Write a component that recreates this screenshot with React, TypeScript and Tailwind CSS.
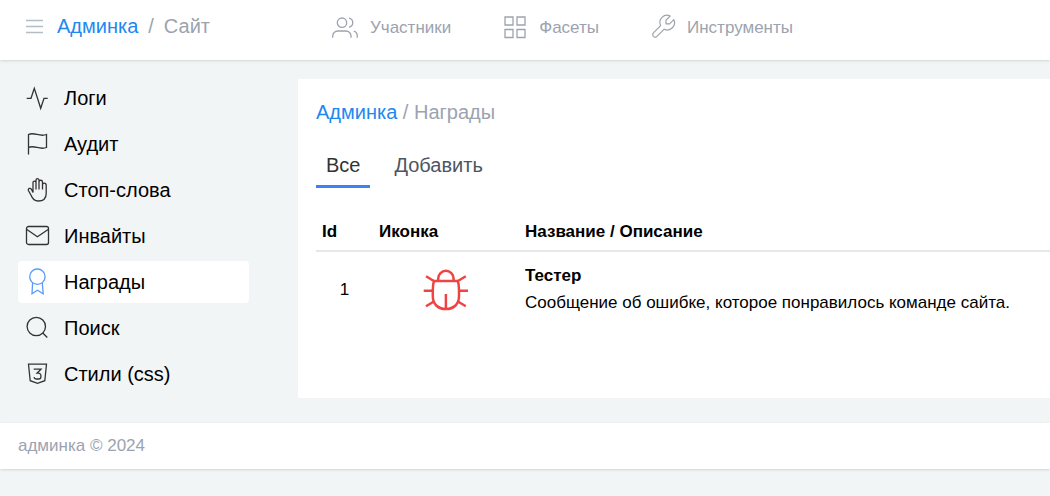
import type { ReactNode } from 'react';

interface IconProps {
  children: ReactNode;
  viewBox?: string;
  className?: string;
}

function Icon({ children, viewBox = '0 0 24 24', className = 'size-6' }: IconProps) {
  return (
    <svg
      viewBox={viewBox}
      className={`${className} shrink-0 overflow-visible`}
      fill="none"
      stroke="currentColor"
      strokeWidth="1.3"
      aria-hidden="true"
    >
      {children}
    </svg>
  );
}

const topLinks = [
  {
    label: 'Участники',
    icon: (
      <Icon viewBox="0 1 26 24" className="h-6 w-[26px]">
        <circle cx="10" cy="7.7" r="4.7" />
        <path d="M.7 22.7V21a5 5 0 0 1 5-5H14a5 5 0 0 1 5 5v1.700M17 3.200c5 1.200 5 7.800 0 9M21.700 16.200c2.300.6 3.600 2.300 3.600 4.800v1.700" />
      </Icon>
    ),
  },
  {
    label: 'Фасеты',
    icon: (
      <Icon viewBox="0 1 24 24">
        <path d="M2 2h8v8H2zM14 2h8v8h-8zM2 14.500h8v8H2zM14 14.500h8v8h-8z" />
      </Icon>
    ),
  },
  {
    label: 'Инструменты',
    icon: (
      <Icon viewBox="1.500 3.500 20 20">
        <path
          strokeWidth="1"
          strokeLinejoin="round"
          d="M17 10h-3V7l3.500-3.500a6 6 0 0 0-8 8l-6 6a2 2 0 0 0 3 3l6-6a6 6 0 0 0 8-8z"
        />
      </Icon>
    ),
  },
];

const sideLinks = [
  {
    label: 'Логи',
    icon: <path d="M1.700 12.300H6l3.300-10 6.400 20 3.300-10h3.700" />,
  },
  {
    label: 'Аудит',
    icon: <path d="M3.500 22.500V2.500c6-3 11 3 18 0v13c-7 3-12-3-18 0" />,
  },
  {
    label: 'Стоп-слова',
    icon: (
      <path d="M8 12V4.600a1.500 1.500 0 0 1 3 0V11.500M11 5V2.200a1.500 1.500 0 0 1 3 0v9.300M14 4a1.700 1.700 0 0 1 3.500 0v7.500M17.500 7a1.800 1.800 0 0 1 3.700 0v8.500c0 5-3.400 7.500-8 7.500-4.200 0-5.700-2-7-5.500l-2.800-5c-.8-2 2-3 3-1.200L8 14.500V12" />
    ),
  },
  {
    label: 'Инвайты',
    icon: (
      <>
        <rect x="1.500" y="2.500" width="22" height="18" rx="2" />
        <path d="M1.500 5.200l10.900 7.600 11.100-7.600" />
      </>
    ),
  },
  {
    label: 'Награды',
    active: true,
    icon: (
      <>
        <circle cx="12.400" cy="6.700" r="7.700" />
        <path d="M7.600 13l-.6 10.700 5.400-3.400 5.800 3.400-.9-10.700" />
      </>
    ),
  },
  {
    label: 'Поиск',
    icon: (
      <>
        <circle cx="11.300" cy="10.500" r="9.200" />
        <path d="M17.800 17l4.500 4.500" />
      </>
    ),
  },
  {
    label: 'Стили (css)',
    icon: (
      <>
        <path d="M3.500 2.200h18l-1.700 16.500-7.300 2.600-7.300-2.600z" />
        <path d="M8.700 7.200H16l-4 4h1.500a2.400 2.400 0 0 1 2.400 2.400v1.200a2.200 2.200 0 0 1-2.200 2.200h-2.400a2.300 2.300 0 0 1-2.300-2" />
      </>
    ),
  },
];

const awards = [
  { id: 1, title: 'Тестер', description: 'Сообщение об ошибке, которое понравилось команде сайта.' },
];

function BugIcon() {
  return (
    <svg
      viewBox="0 0 46 42"
      className="mx-auto h-[42px] w-[46px] text-[#ef4444]"
      fill="none"
      stroke="currentColor"
      strokeWidth="2.500"
      aria-hidden="true"
    >
      <path d="M15.200 12V9.500a7.700 7.700 0 0 1 15.400 0V12M11 12h23.800c.8 2 1.200 5 1.200 9v6c0 8-5 13-13.100 13S9.800 35 9.800 27v-6c0-4 .4-7 1.200-9zM22.900 25v15" />
      <path d="M3 7.300l8.300 5M.7 21.700h9M3 37.300l8.300-5M42.800 7.300l-8.300 5M45 21.700h-9M42.800 37.300l-8.300-5" />
    </svg>
  );
}

export default function App() {
  return (
    <div className="min-h-screen bg-[#f1f5f6] font-['Liberation_Sans',Arial,sans-serif] text-black">
      <header className="flex h-[60px] items-center bg-white pb-2 shadow-sm">
        <div className="flex w-[332px] shrink-0 items-center pl-[25px] text-xl text-[#9ca3af]">
          <button type="button" aria-label="Меню" className="text-[#b4bcc4]">
            <Icon viewBox="0 0 18 18" className="size-[18px]">
              <path d="M1 3.500h17M1 9.500h17M1 15.500h17" />
            </Icon>
          </button>
          <a href="#admin" className="ml-[14px] text-[#1e88f0]">Админка</a>
          <span className="mx-[10px]">/</span>
          <span>Сайт</span>
        </div>
        <nav className="flex items-center gap-[52px] pt-1 text-[17px] text-[#9ca3af]">
          {topLinks.map((link) => (
            <a key={link.label} href="#top" className="flex items-center gap-3">
              {link.icon}
              {link.label}
            </a>
          ))}
        </nav>
      </header>

      <div className="flex items-start pt-[17px] pb-[25px] pl-[18px]">
        <nav className="mr-[49px] flex w-[231px] shrink-0 flex-col gap-1">
          {sideLinks.map((link) => (
            <a
              key={link.label}
              href="#side"
              className={`flex h-[42px] items-center gap-[15px] rounded-[4px] px-[7px] text-xl ${link.active ? 'bg-white' : ''}`}
            >
              <span className={link.active ? 'text-[#5b9bf8]' : 'text-[#333]'}>
                <Icon>{link.icon}</Icon>
              </span>
              {link.label}
            </a>
          ))}
        </nav>

        <main className="mt-[2px] min-h-[319px] min-w-0 flex-1 bg-white pt-[19px] pl-[18px]">
          <div className="text-xl text-[#9ca3af]">
            <a href="#admin" className="text-[#1e88f0]">Админка</a> / Награды
          </div>

          {/* Tabs */}
          <div className="mt-5 flex items-start gap-[14px] text-xl text-[#4b5563]">
            <a href="#all" className="border-b-[3px] border-[#3b82f6] px-[10px] pt-[5px] pb-[6px] text-[#333]">Все</a>
            <a href="#add" className="px-[10px] pt-[5px] pb-[6px]">Добавить</a>
          </div>

          <table className="mt-6 w-full text-left text-[17px] leading-6">
            <thead>
              <tr className="border-b-2 border-[#e5e7eb]">
                <th className="w-[57px] px-[6px] pt-2 pb-[6px]">Id</th>
                <th className="w-[146px] px-[6px] pt-2 pb-[6px]">Иконка</th>
                <th className="px-[6px] pt-2 pb-[6px]">Название / Описание</th>
              </tr>
            </thead>
            <tbody>
              {awards.map((award) => (
                <tr key={award.id}>
                  <td className="px-[6px] py-3 text-center">{award.id}</td>
                  <td className="px-[6px] py-3">
                    <BugIcon />
                  </td>
                  <td className="px-[6px] py-3">
                    <div className="font-bold">{award.title}</div>
                    <div className="mt-[3px]">{award.description}</div>
                  </td>
                </tr>
              ))}
            </tbody>
          </table>
        </main>
      </div>

      <footer className="bg-white px-[18px] py-[11px] text-[17px] leading-6 text-[#9ca3af] shadow-sm">
        админка © 2024
      </footer>
    </div>
  );
}
